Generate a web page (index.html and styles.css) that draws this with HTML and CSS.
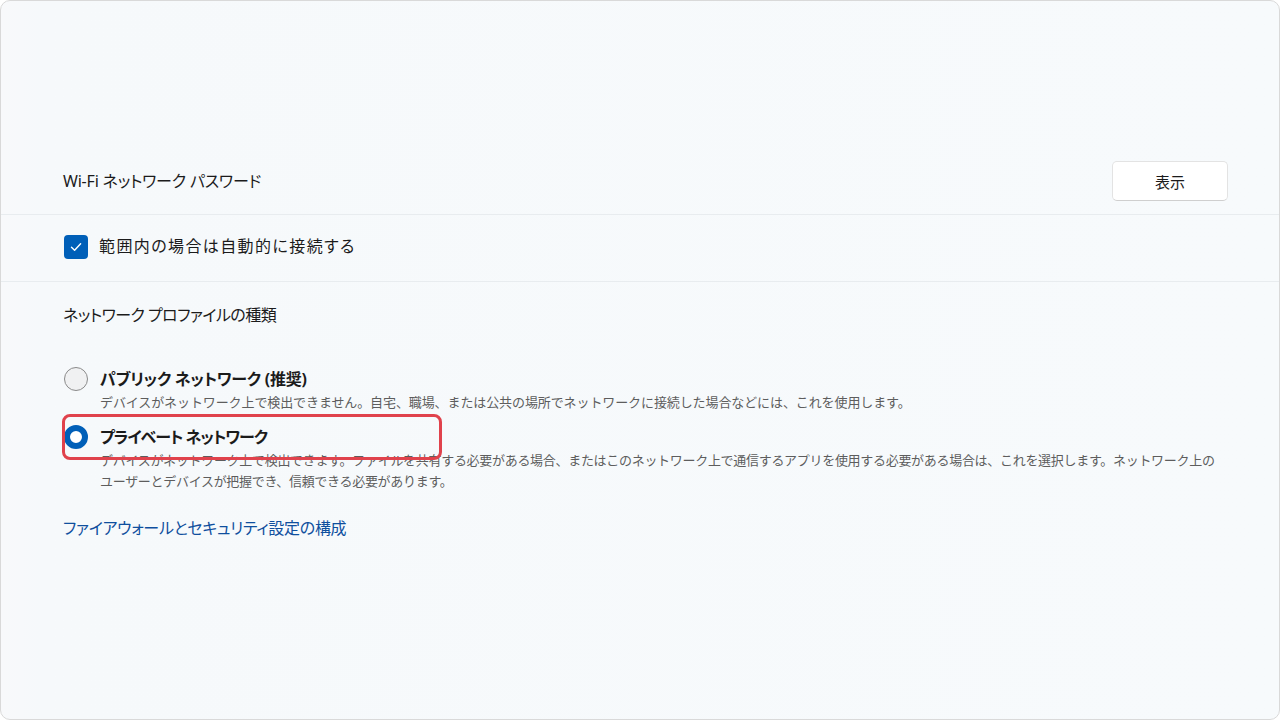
FILE: index.html
```html
<!DOCTYPE html>
<html lang="ja">

<head>
    <meta charset="UTF-8">
    <title>Wi-Fi プロパティ</title>
    <link rel="stylesheet" href="styles.css">
</head>

<body>
    <div class="frame">
        <div class="row">
            <span class="label wifi-label">Wi-Fi ネットワーク パスワード</span>
            <button class="btn">表示</button>
        </div>
        <div class="row">
            <span class="checkbox">
                <svg width="14" height="14" viewBox="0 0 14 14"><path d="M2.5 7.3 L5.6 10.3 L11.6 3.8" fill="none" stroke="#fff" stroke-width="1.4" stroke-linecap="round" stroke-linejoin="round"/></svg>
            </span>
            <span class="label check-label">範囲内の場合は自動的に接続する</span>
        </div>

        <div class="section">
            <div class="label section-title">ネットワーク プロファイルの種類</div>

            <div class="option first">
                <span class="radio"></span>
                <div class="opt-title">パブリック ネットワーク (推奨)</div>
                <div class="opt-desc">デバイスがネットワーク上で検出できません。自宅、職場、または公共の場所でネットワークに接続した場合などには、これを使用します。</div>
            </div>

            <div class="option second">
                <span class="radio checked"></span>
                <div class="opt-title">プライベート ネットワーク</div>
                <div class="opt-desc">デバイスがネットワーク上で検出できます。ファイルを共有する必要がある場合、またはこのネットワーク上で通信するアプリを使用する必要がある場合は、これを選択します。ネットワーク上の<br>ユーザーとデバイスが把握でき、信頼できる必要があります。</div>
                <span class="highlight"></span>
            </div>

            <a class="link" href="#">ファイアウォールとセキュリティ設定の構成</a>
        </div>
    </div>
</body>

</html>
```

FILE: styles.css
```css
html,
body {
    margin: 0;
    padding: 0;
}

body {
    font-family: "Noto Sans", "Noto Sans CJK JP", sans-serif;
    color: #1b1b1b;
    background: #ffffff;
}

.frame {
    box-sizing: border-box;
    width: 1280px;
    height: 720px;
    border: 1px solid #d9d9d9;
    border-radius: 10px;
    background: linear-gradient(90deg, #f8f9fb 0px, #f6f9fb 40px, #f7fafc 100%);
    padding-top: 147px;
    overflow: hidden;
}

.label {
    font-size: 16px;
    line-height: 22px;
    font-feature-settings: "palt";
}

.wifi-label {
    letter-spacing: -0.2px;
}

.row {
    display: flex;
    align-items: center;
    height: 66px;
    padding: 0 51px 0 62px;
    border-bottom: 1px solid #e8ecef;
}

.btn {
    margin-left: auto;
    width: 116px;
    height: 40px;
    background: #ffffff;
    border: 1px solid #e3e3e3;
    border-bottom-color: #cfcfcf;
    border-radius: 5px;
    font-family: "Noto Sans CJK JP", sans-serif;
    font-size: 15px;
    color: #1b1b1b;
}

.checkbox {
    width: 24px;
    height: 24px;
    margin-left: 1px;
    margin-top: -2px;
    border-radius: 4px;
    background: #005fb8;
    display: flex;
    align-items: center;
    justify-content: center;
}

.check-label {
    margin-left: 11px;
    margin-top: -4px;
    letter-spacing: 1.4px;
}

.section {
    padding-left: 62px;
}

.section-title {
    margin-top: 22px;
    letter-spacing: -0.55px;
}

.option {
    position: relative;
    display: grid;
    grid-template-columns: 24px auto;
    column-gap: 12px;
    padding-left: 1px;
}

.option.first {
    margin-top: 41px;
}

.option + .option {
    margin-top: 12px;
}

.radio {
    box-sizing: border-box;
    width: 24px;
    height: 24px;
    border-radius: 50%;
    border: 1px solid #8a8a8a;
    background: #f0f1f2;
    grid-row: 1;
}

.radio.checked {
    border: 6px solid #005fb8;
    background: #ffffff;
}

.opt-title {
    font-size: 16px;
    line-height: 24px;
    font-weight: bold;
    font-feature-settings: "palt";
    letter-spacing: -0.25px;
}

.second .opt-title {
    letter-spacing: -1px;
}

.opt-desc {
    grid-column: 2;
    margin-top: 1px;
    font-size: 13px;
    line-height: 21px;
    letter-spacing: -0.3px;
    color: #5d5d5d;
    white-space: nowrap;
}

.first .opt-desc {
    letter-spacing: -0.1px;
}

.highlight {
    position: absolute;
    left: -1px;
    top: -11px;
    width: 380px;
    height: 46px;
    box-sizing: border-box;
    border: 3px solid #e0424c;
    border-radius: 8px;
}

.link {
    display: inline-block;
    margin-top: 25px;
    font-size: 16px;
    line-height: 22px;
    letter-spacing: -0.3px;
    color: #0f4f9e;
    text-decoration: none;
    font-feature-settings: "palt";
}
```
